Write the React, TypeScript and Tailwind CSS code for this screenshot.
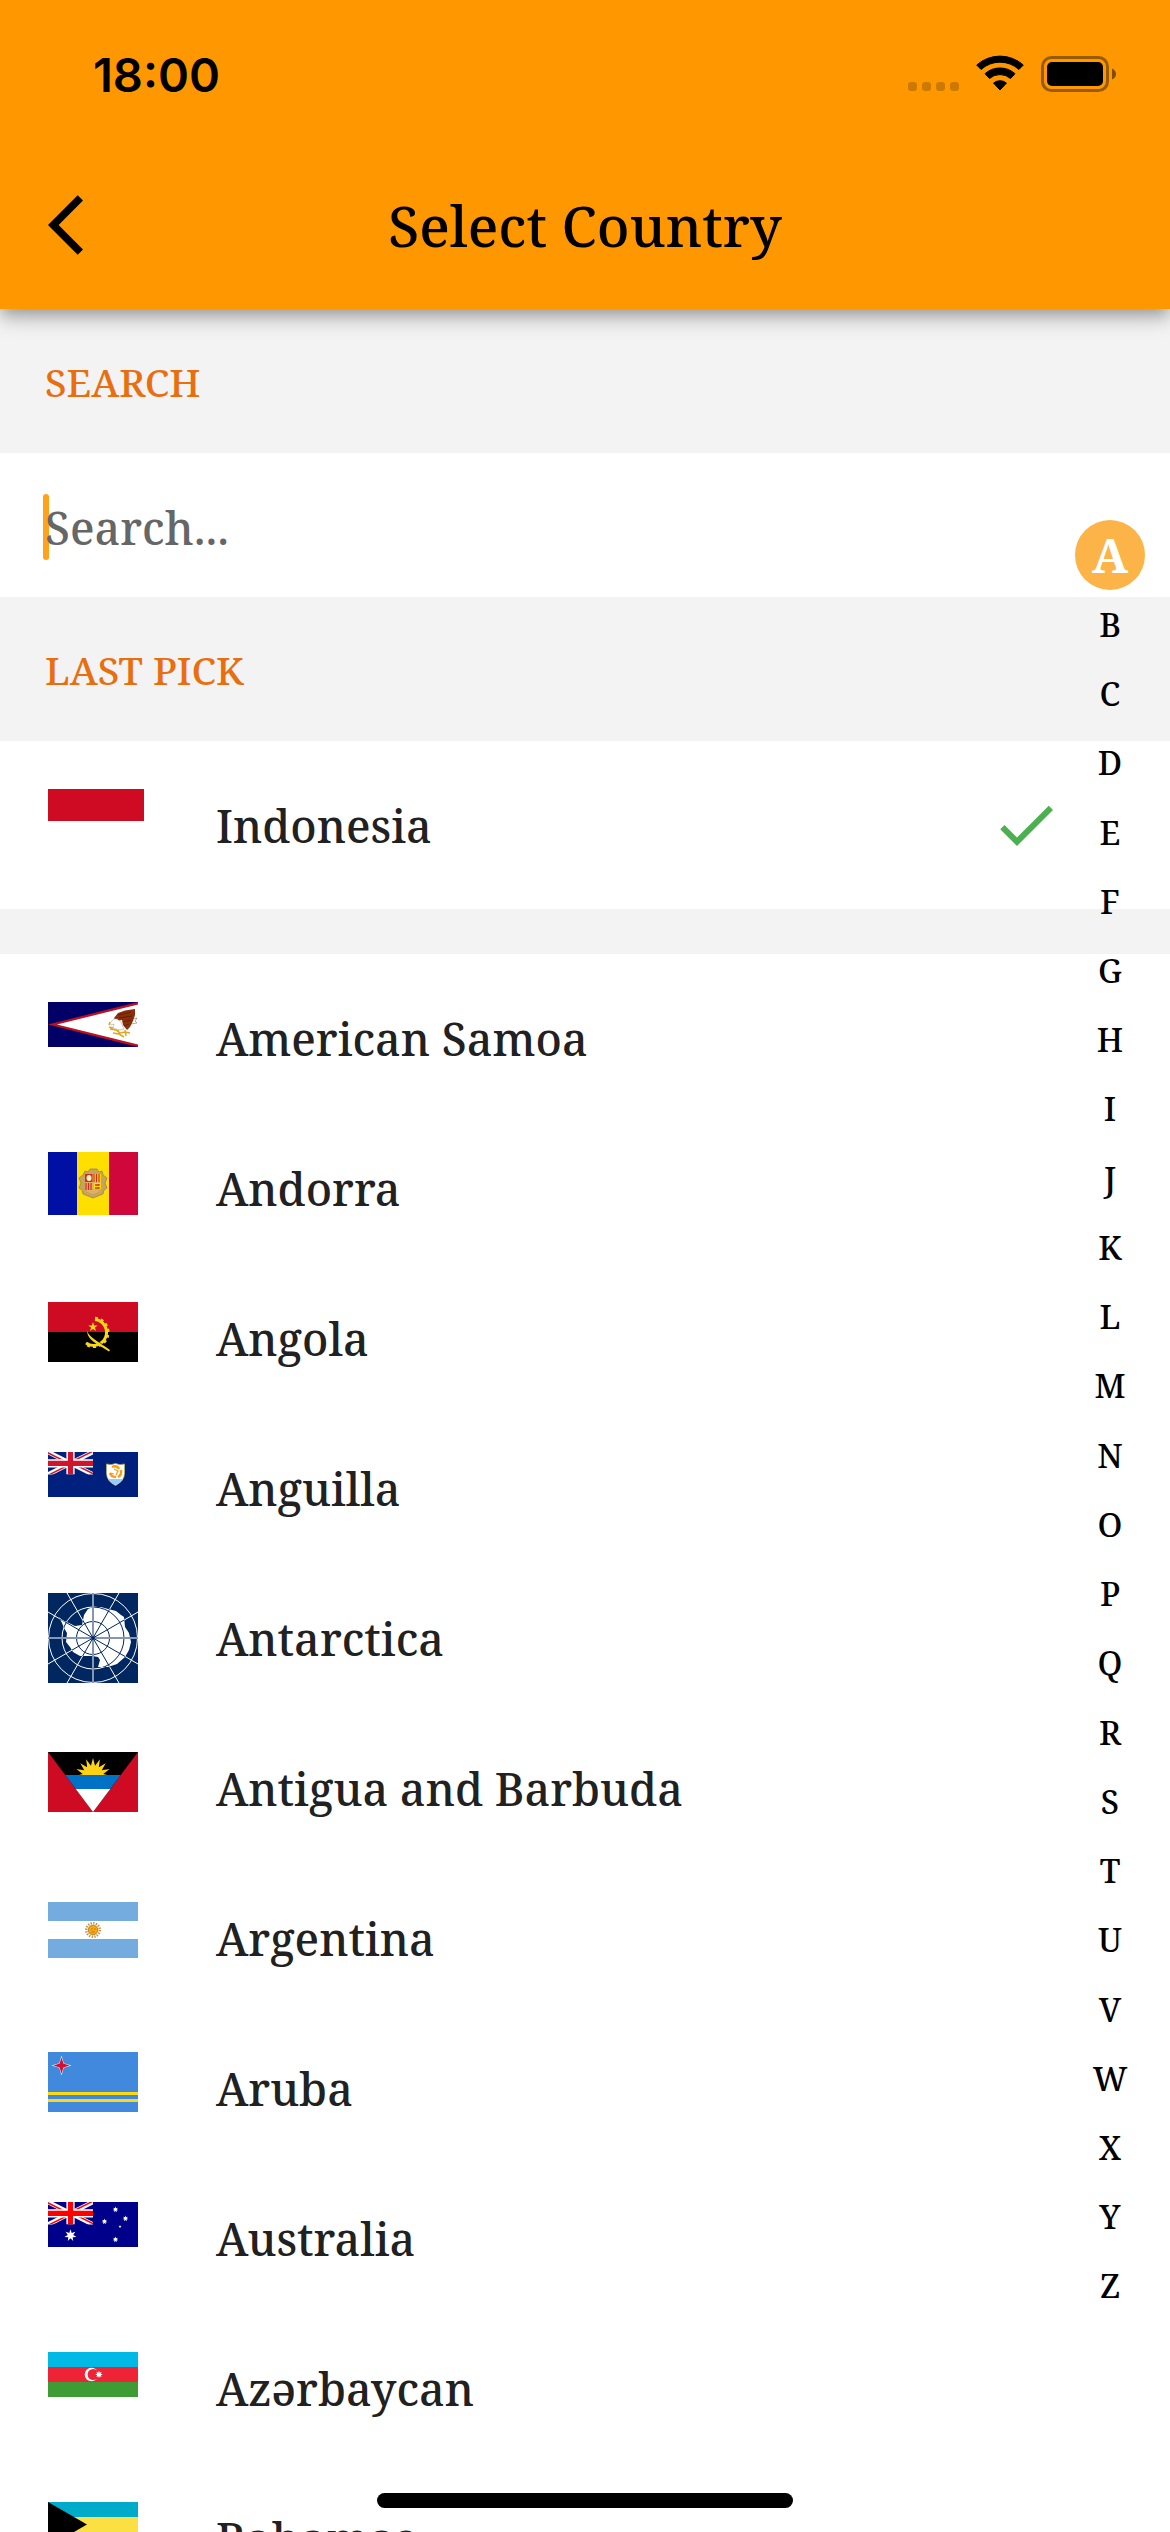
import type { ReactNode } from 'react';

function starPoints(cx: number, cy: number, outer: number, inner: number, tips: number) {
  return Array.from({ length: tips * 2 }, (_, i) => {
    const r = i % 2 === 0 ? outer : inner;
    const a = (Math.PI * i) / tips - Math.PI / 2;
    return `${(cx + r * Math.cos(a)).toFixed(2)},${(cy + r * Math.sin(a)).toFixed(2)}`;
  }).join(' ');
}

function Flag({ height, className, children }: { height: number; className: string; children: ReactNode }) {
  return (
    <svg aria-hidden="true" viewBox={`0 0 90 ${height}`} className={`block w-[90px] shrink-0 ${className}`}>
      {children}
    </svg>
  );
}

function UnionJack({ id, red, blue }: { id: string; red: string; blue: string }) {
  return (
    <svg x="0" y="0" width="45" height="22.5" viewBox="0 0 60 30">
      <clipPath id={id}>
        <path d="M30 15h30v15zM30 15v15H0zM30 15H0V0zM30 15V0h30z" />
      </clipPath>
      <rect width="60" height="30" fill={blue} />
      <path d="M0 0l60 30M60 0L0 30" stroke="#fff" strokeWidth="6" />
      <path d="M0 0l60 30M60 0L0 30" clipPath={`url(#${id})`} stroke={red} strokeWidth="4" />
      <path d="M30 0v30M0 15h60" stroke="#fff" strokeWidth="11" />
      <path d="M30 0v30M0 15h60" stroke={red} strokeWidth="7" />
    </svg>
  );
}

function AmericanSamoa() {
  return (
    <Flag height={45} className="h-[45px]">
      <rect width="90" height="45" fill="#000067" />
      <path d="M0 22.5L90 0v45z" fill="#bd1021" />
      <path d="M9 22.5L90 2.5v40z" fill="#fff" />
      <path d="M82 17l7-1-2 3 2 2-6 1z" fill="#fff" stroke="#777" strokeWidth="0.6" />
      <path d="M87 7l-10 1.500-7 2.500-4 5 2 3 6-1 1 5 4 5 3-3 3-6 2-6z" fill="#8b2f0a" />
      <path d="M70 13l13-3M71 16l13-2M75 20l8-2M76 24l5-2" stroke="#5a1a05" strokeWidth="0.8" />
      <path d="M66 17l-4 4 1 2 3-1-1 4 6 2 5-1-3-7-4-3z" fill="#fff" stroke="#999" strokeWidth="0.5" />
      <path d="M62 20l-1 3M62 27l6 1 4 3 5-1 5 1M65 31l6 1 5 3M61 25l4 1M70 28l2 5M77 28l1 6" fill="none" stroke="#e0a820" strokeWidth="1.500" />
    </Flag>
  );
}

function Andorra() {
  return (
    <Flag height={63} className="h-[63px]">
      <rect width="90" height="63" fill="#0010a5" />
      <rect x="29" width="61" height="63" fill="#fedf00" />
      <rect x="61" width="29" height="63" fill="#d0073a" />
      <path d="M37 19l3 1 2-3h7l2 3 3-1 1 4 4 3-2 5 2 5-3 2-1 4-5 2-5 2-5-2-5-2-1-4-3-2 2-5-2-5 4-3z" fill="#c7a45c" stroke="#a5824a" strokeWidth="0.8" />
      <path d="M37 22h16v15q-1 3-8 5-7-2-8-5z" fill="#d9b268" />
      <rect x="37" y="22" width="7.500" height="8" fill="#d52b1e" />
      <ellipse cx="41" cy="26" rx="2.500" ry="3" fill="#fff3c0" />
      <rect x="45" y="22" width="8" height="8" fill="#fedf00" />
      <path d="M46 22v8M48.500 22v8M51 22v8M38 31v7M40.500 31v7M43 31v7" stroke="#d52b1e" strokeWidth="1.200" />
      <path d="M46 31h7v6h-7z" fill="#fedf00" />
      <path d="M47 33h4v-1M47 36h4v-1" stroke="#d52b1e" strokeWidth="1.300" fill="none" />
    </Flag>
  );
}

function Angola() {
  return (
    <Flag height={60} className="h-[60px]">
      <rect width="90" height="30" fill="#ce0b22" />
      <rect y="30" width="90" height="30" />
      <path d="M47 17.500A13 13 0 1 1 38 41" fill="none" stroke="#f9d616" strokeWidth="3" />
      <path d="M47 15.800A14.600 14.600 0 1 1 37 42" fill="none" stroke="#f9d616" strokeWidth="2.200" strokeDasharray="3 3" />
      <path d="M39 28.500c1 4 5 7 10 10.500l13 9-1 1.500-13-8c-6-4-9-8-9-13z" fill="#f9d616" />
      <path d="M43 34l12 9" stroke="#000" strokeWidth="0.6" />
      <polygon points={starPoints(45, 25, 5, 2, 5)} fill="#f9d616" />
    </Flag>
  );
}

function Anguilla() {
  return (
    <Flag height={45} className="h-[45px]">
      <rect width="90" height="45" fill="#00207d" />
      <UnionJack id="jack-ai" red="#cf142b" blue="#00207d" />
      <path d="M58.500 12q5 1.500 9-.500 4 2 9 .500v9q0 8-9 12.500-9-4.500-9-12.500z" fill="#fff" stroke="#b9b45a" strokeWidth="0.7" />
      <path d="M60 27h15q-2 3.500-7.500 6-5.500-2.500-7.500-6z" fill="#99ccff" />
      <path d="M64 15q5-2 7 2M73 18q1 5-3 7M68 25q-5 0-6-4" fill="none" stroke="#ff9a0a" strokeWidth="2.400" />
      <path d="M66 17l4 2-2 4M62 21l4 1" fill="none" stroke="#ff9a0a" strokeWidth="1.200" />
    </Flag>
  );
}

const SPOKES = 'M45 45L22.500 6M45 45L67.500 6M45 45L6 22.500M45 45L84 22.500M45 45L6 67.500M45 45L84 67.500M45 45L22.500 84M45 45L67.500 84';

function Graticule({ color }: { color: string }) {
  return (
    <g fill="none" stroke={color} strokeWidth="1">
      <circle cx="45" cy="45" r="44.500" />
      <circle cx="45" cy="45" r="31" />
      <circle cx="45" cy="45" r="16.500" />
      <path d={SPOKES} />
      <path d="M0 19l6 3.500M90 19l-6 3.500M0 71l6-3.500M90 71l-6-3.500M19 0l3.500 6M71 0l-3.500 6M19 90l3.500-6M71 90l-3.500-6" />
    </g>
  );
}

const LAND =
  'M11 24L15 28 21 30 27 33 34 32 36 22 40 16 45 14 53 14 60 16 68 18 73 22 76 24 77 34 81 40 83 49 81 57 77 64 69 71 60 74 50 74 52 67 50 64 44 63 32 63 25 59 22 54 18 49 19 40 16 35 14 30z';

function Antarctica() {
  return (
    <Flag height={90} className="h-[90px]">
      <clipPath id="antarctic-land">
        <path d={LAND} />
      </clipPath>
      <rect width="90" height="90" fill="#002760" />
      <Graticule color="#fff" />
      <path d={LAND} fill="#fff" />
      <g clipPath="url(#antarctic-land)">
        <Graticule color="#002760" />
      </g>
      <path d="M45 0v90M0 45h90" stroke="#8496b3" strokeWidth="2" />
      <circle cx="45" cy="45" r="2" fill="#002760" />
    </Flag>
  );
}

function Antigua() {
  return (
    <Flag height={60} className="h-[60px]">
      <clipPath id="antigua-v">
        <path d="M0 0h90L45 60z" />
      </clipPath>
      <rect width="90" height="60" fill="#ce0b22" />
      <g clipPath="url(#antigua-v)">
        <rect width="90" height="60" />
        <polygon points={starPoints(45, 24, 18, 10.5, 16)} fill="#fcd116" />
        <rect y="23" width="90" height="14" fill="#0072c6" />
        <rect y="37" width="90" height="23" fill="#fff" />
      </g>
    </Flag>
  );
}

function Argentina() {
  return (
    <Flag height={56} className="h-[56px]">
      <rect width="90" height="56" fill="#74acdf" />
      <rect y="19" width="90" height="18" fill="#fff" />
      <circle cx="45" cy="28" r="6.800" fill="none" stroke="#c98a3c" strokeWidth="2.400" strokeDasharray="1.300 1.370" />
      <circle cx="45" cy="28" r="4.800" fill="#f6a80e" stroke="#b06f1a" strokeWidth="0.8" />
      <path d="M43 27h1.500M46 27h1.500M43.500 30h3" stroke="#a5641a" strokeWidth="0.7" />
    </Flag>
  );
}

function Aruba() {
  return (
    <Flag height={60} className="h-[60px]">
      <rect width="90" height="60" fill="#4189dd" />
      <path d="M0 41.500h90M0 48.500h90" stroke="#ffd90f" strokeWidth="3" />
      <polygon points={starPoints(13.5, 13.5, 10, 3.2, 4)} fill="#fff" />
      <polygon points={starPoints(13.5, 13.5, 8.2, 2.7, 4)} fill="#d21034" />
    </Flag>
  );
}

function Australia() {
  return (
    <Flag height={45} className="h-[45px]">
      <rect width="90" height="45" fill="#00008b" />
      <UnionJack id="jack-au" red="#ff0000" blue="#00008b" />
      <g fill="#fff">
        <polygon points={starPoints(22.5, 33.5, 6.2, 2.8, 7)} />
        <polygon points={starPoints(67.5, 7.5, 3, 1.4, 7)} />
        <polygon points={starPoints(77.5, 16.5, 3, 1.4, 7)} />
        <polygon points={starPoints(56.5, 19.5, 3, 1.4, 7)} />
        <polygon points={starPoints(67.5, 37.5, 3, 1.4, 7)} />
        <polygon points={starPoints(72, 24.5, 1.5, 0.7, 5)} />
      </g>
    </Flag>
  );
}

function Azerbaijan() {
  return (
    <Flag height={45} className="h-[45px]">
      <rect width="90" height="45" fill="#00b9e4" />
      <rect y="15" width="90" height="15" fill="#ef2336" />
      <rect y="30" width="90" height="15" fill="#3f9c35" />
      <circle cx="43.500" cy="22.500" r="6.800" fill="#fff" />
      <circle cx="45.200" cy="22.500" r="5.600" fill="#ef2336" />
      <polygon points={starPoints(51, 22.5, 3.7, 2, 8)} fill="#fff" />
    </Flag>
  );
}

function Bahamas() {
  return (
    <Flag height={45} className="h-[45px]">
      <rect width="90" height="45" fill="#00abc9" />
      <rect y="15" width="90" height="15" fill="#fae042" />
      <path d="M0 0l39 22.500L0 45z" />
    </Flag>
  );
}

const COUNTRIES: { name: string; flag: ReactNode; square?: boolean }[] = [
  { name: 'American Samoa', flag: <AmericanSamoa /> },
  { name: 'Andorra', flag: <Andorra /> },
  { name: 'Angola', flag: <Angola /> },
  { name: 'Anguilla', flag: <Anguilla /> },
  { name: 'Antarctica', flag: <Antarctica />, square: true },
  { name: 'Antigua and Barbuda', flag: <Antigua /> },
  { name: 'Argentina', flag: <Argentina /> },
  { name: 'Aruba', flag: <Aruba /> },
  { name: 'Australia', flag: <Australia /> },
  { name: 'Azərbaycan', flag: <Azerbaijan /> },
  { name: 'Bahamas', flag: <Bahamas /> },
];

const LETTERS = 'ABCDEFGHIJKLMNOPQRSTUVWXYZ'.split('');

function StatusBar() {
  return (
    <div className="flex h-[141px] items-center justify-between pt-[7px] pr-[54px] pl-[93px]">
      <time className="font-['Inter',sans-serif] text-[47px] leading-none font-semibold">18:00</time>
      <div className="flex items-center gap-[17px]">
        <svg aria-hidden="true" viewBox="0 0 51 36" className="h-9 w-[51px]">
          <g fillOpacity="0.2">
            <rect x="0" y="26" width="9" height="9" rx="3" />
            <rect x="14" y="26" width="9" height="9" rx="3" />
            <rect x="28" y="26" width="9" height="9" rx="3" />
            <rect x="42" y="26" width="9" height="9" rx="3" />
          </g>
        </svg>
        <svg aria-hidden="true" viewBox="0 0 48 38" className="h-[38px] w-12">
          <path
            strokeLinejoin="round"
            stroke="#000"
            strokeWidth="1"
            d="M.700 10A35 35 0 0 1 47.300 10L42.900 14.500A28 28 0 0 0 5.100 14.500zM9 18.700A22.500 22.500 0 0 1 39 18.700L34.500 23.500A16 16 0 0 0 13.500 23.500zM17.500 28.100A10 10 0 0 1 30.500 28.100L24 35z"
          />
        </svg>
        <svg aria-hidden="true" viewBox="0 0 75 36" className="h-9 w-[75px]">
          <rect x="1.500" y="1.500" width="65" height="33" rx="9" fill="none" stroke="#000" strokeOpacity="0.4" strokeWidth="3" />
          <rect x="6" y="6" width="56" height="24" rx="5" />
          <path d="M71 12.500q4 2 4 5.500t-4 5.500z" fillOpacity="0.5" />
        </svg>
      </div>
    </div>
  );
}

function SectionTitle({ children }: { children: ReactNode }) {
  return (
    <h2 className="flex h-36 items-center bg-[#f3f3f3] px-[45px] text-[39px] leading-none font-medium text-[#e86e10]">
      {children}
    </h2>
  );
}

export default function App() {
  return (
    <div className="flex h-screen flex-col overflow-hidden bg-white font-['Noto_Serif','DejaVu_Serif_Condensed','DejaVu_Serif',serif] text-black">
      <header className="relative z-10 bg-[#ff9800] shadow-[0_6px_12px_-3px_rgba(0,0,0,0.2),0_12px_15px_0_rgba(0,0,0,0.14),0_3px_30px_0_rgba(0,0,0,0.12)]">
        <StatusBar />
        <div className="grid h-[168px] grid-cols-[72px_1fr_72px] items-center px-12">
          <button type="button" aria-label="Back" className="size-[72px]">
            <svg aria-hidden="true" viewBox="0 0 24 24" className="size-[72px]">
              <path d="M11.670 3.870L9.900 2.100 0 12l9.900 9.900 1.770-1.770L3.540 12z" />
            </svg>
          </button>
          <h1 className="text-center text-[56px] leading-none font-medium">Select Country</h1>
        </div>
      </header>

      <main className="relative min-h-0 flex-1">
        <div className="h-full overflow-y-auto [scrollbar-width:none]">
          <SectionTitle>
            <label htmlFor="country-search">SEARCH</label>
          </SectionTitle>
          <div className="flex h-36 items-center pt-1 pr-[120px] pl-[43px]">
            <span aria-hidden="true" className="h-[66px] w-1.5 shrink-0 rounded-[3px] bg-[#ffa31a]" />
            <input
              id="country-search"
              type="text"
              placeholder="Search..."
              className="-ml-1 h-[72px] min-w-0 flex-1 bg-transparent text-[45px] font-medium text-[#212121] outline-none placeholder:text-[#666666] placeholder:opacity-100"
            />
          </div>

          <SectionTitle>LAST PICK</SectionTitle>
          <button type="button" className="flex h-[168px] w-full items-start pt-12 pr-[108px] pl-12 text-left">
            <svg aria-hidden="true" viewBox="0 0 96 64" className="h-16 w-24 shrink-0">
              <rect width="96" height="64" fill="#fff" />
              <rect width="96" height="32" fill="#ce0b22" />
            </svg>
            <span className="ml-[72px] flex-1 text-[45px] leading-[74px] font-medium text-[#212121]">Indonesia</span>
            <svg aria-hidden="true" viewBox="0 0 24 24" className="size-[72px] shrink-0" fill="#4caf50">
              <path d="M9 16.170L4.830 12l-1.420 1.410L9 19 21 7l-1.410-1.410z" />
            </svg>
          </button>

          <div className="h-[45px] bg-[#f3f3f3]" />

          <ul>
            {COUNTRIES.map(({ name, flag, square }) => (
              <li key={name}>
                <button type="button" className="flex h-[150px] w-full items-start pt-12 pr-[120px] pl-12 text-left">
                  <span className={square ? 'flex h-[72px] w-24 items-center' : 'flex h-[72px] w-24 items-start'}>{flag}</span>
                  <span className="ml-[72px] flex-1 text-[45px] leading-[74px] font-medium text-[#212121]">{name}</span>
                </button>
              </li>
            ))}
          </ul>
        </div>

        <nav aria-label="Jump to letter" className="absolute inset-y-0 right-[25px] flex items-center">
          <div className="flex h-[1800px] w-[70px] flex-col">
            {LETTERS.map((letter, i) => (
              <button
                key={letter}
                type="button"
                aria-pressed={i === 0}
                className="flex min-h-0 flex-1 items-center justify-center text-[33px] leading-none font-medium aria-pressed:text-[48px] aria-pressed:font-bold aria-pressed:text-white"
              >
                {i === 0 ? (
                  <span className="flex size-[70px] shrink-0 items-center justify-center rounded-full bg-[#fcb448]">{letter}</span>
                ) : (
                  letter
                )}
              </button>
            ))}
          </div>
        </nav>
      </main>

      <div className="fixed inset-x-0 bottom-6 mx-auto h-[15px] w-[416px] rounded-full bg-black" />
    </div>
  );
}
